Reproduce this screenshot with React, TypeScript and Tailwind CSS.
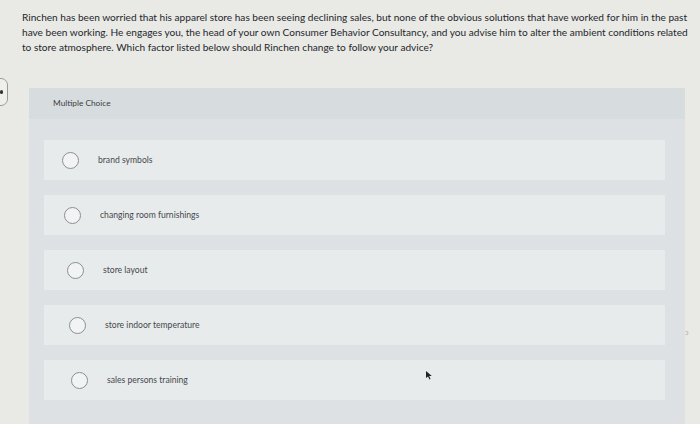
const options = [
  { label: "brand symbols", ml: "ml-[18px]" },
  { label: "changing room furnishings", ml: "ml-[20px]" },
  { label: "store layout", ml: "ml-[23px]" },
  { label: "store indoor temperature", ml: "ml-[25px]" },
  { label: "sales persons training", ml: "ml-[27px]" },
];

const lines = [
  "Rinchen has been worried that his apparel store has been seeing declining sales, but none of the obvious solutions that have worked for him in the past",
  "have been working. He engages you, the head of your own Consumer Behavior Consultancy, and you advise him to alter the ambient conditions related",
  "to store atmosphere. Which factor listed below should Rinchen change to follow your advice?",
];

export default function App() {
  return (
    <div
      className="relative h-[424px] w-[700px] overflow-hidden bg-[#e9e9e6] text-[#2f3236]"
      style={{ fontFamily: "Lato, 'Open Sans', sans-serif" }}
    >
      <div className="pl-[22px] pt-[10px] text-[10.1px] leading-[15px] text-[#24272b]">
        {lines.map((l) => (
          <div key={l} className="whitespace-nowrap">
            {l}
          </div>
        ))}
      </div>

      <div className="absolute left-[-12px] top-[78px] flex h-[28px] w-[20px] items-center justify-end rounded-[7px] border border-[#9a9a9a] bg-[#efefec] pr-[4px]">
        <div className="h-[4px] w-[3px] rounded-full bg-[#333]" />
      </div>

      <div className="ml-[29px] mr-[15px] mt-[33px] h-[340px] bg-[#dde1e3]">
        <div className="flex h-[31px] items-center bg-[#d7dcdf] pl-[24px] text-[8.3px] text-[#3b3e42]">
          Multiple Choice
        </div>
        <div className="flex flex-col gap-[15px] pl-[15px] pr-[20px] pt-[21px]">
          {options.map((o) => (
            <div key={o.label} className="flex h-[40px] items-center bg-[#e8ebec]">
              <div
                className={`${o.ml} h-[17px] w-[17px] shrink-0 rounded-full border border-[#8b8f93] bg-[#f1f3f4]`}
              />
              <div className="ml-[19px] text-[8.6px] text-[#45484c]">{o.label}</div>
            </div>
          ))}
        </div>
      </div>

      <div className="absolute left-[685px] top-[327px] text-[7px] text-[#aaa]">ɔ</div>

      <svg className="absolute left-[425px] top-[370px]" width="8" height="10" viewBox="0 0 8 10">
        <path d="M1 1 L1 8 L3 6.5 L4.5 9.5 L5.5 9 L4.2 6 L6.8 6 Z" fill="#222" />
      </svg>
    </div>
  );
}
